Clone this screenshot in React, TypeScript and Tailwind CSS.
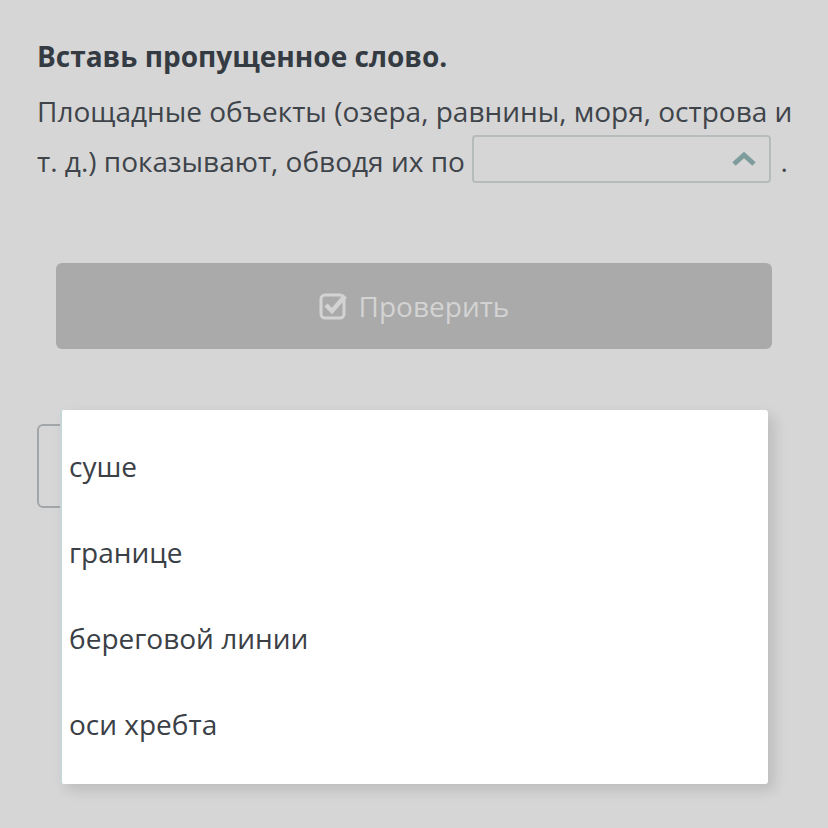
import { useState } from 'react';

const options = ['суше', 'границе', 'береговой линии', 'оси хребта'];

export default function App() {
  const [selected, setSelected] = useState('');

  return (
    <div
      className="relative min-h-[828px] w-[828px] bg-[#d6d6d6] text-[#3a3f45]"
      style={{ fontFamily: '"Open Sans", "Noto Sans", sans-serif' }}
    >
      <div className="pl-[37px] pr-[20px] pt-[36px]">
        <h1 className="text-[28px] font-bold leading-[40px] text-[#353b42]">Вставь пропущенное слово.</h1>

        <p className="mt-[10px] text-[28px] leading-[50px] text-[#3e444a]">
          Площадные объекты (озера, равнины, моря, острова и т. д.) показывают, обводя их по{' '}
          <span className="inline-flex h-[48px] w-[299px] -translate-y-[6px] items-center justify-end rounded-[4px] border-2 border-[#b6bcbc] px-[12px] align-middle">
            {selected}
            <svg width="26" height="16" viewBox="0 0 26 16" className="ml-auto">
              <path d="M3 13 L13 4 L23 13" fill="none" stroke="#7f9c9c" strokeWidth="5" />
            </svg>
          </span>{' '}
          <span className="ml-[2px]">.</span>
        </p>

        <div className="ml-[19px] mr-[36px] mt-[74px] flex h-[86px] items-center justify-center gap-[10px] rounded-[6px] bg-[#aaaaaa] text-[28px] text-[#d3d3d3]">
          <svg width="30" height="30" viewBox="0 0 30 30">
            <rect x="2" y="4" width="23" height="23" rx="4" fill="none" stroke="#d3d3d3" strokeWidth="3" />
            <path d="M7 14 L13 20 L26 5" fill="none" stroke="#d3d3d3" strokeWidth="4.5" />
          </svg>
          <span>Проверить</span>
        </div>

        <div className="mt-[75px] h-[84px] w-[120px] rounded-[6px] border-2 border-[#a3a6a8]" />
      </div>

      <ul className="absolute left-[60px] top-[410px] w-[708px] rounded-[3px] border-l-2 border-[#c7d6d6] bg-white pb-[17px] pt-[13px] shadow-[6px_6px_14px_rgba(0,0,0,0.12)]">
        {options.map((o) => (
          <li
            key={o}
            onClick={() => setSelected(o)}
            className="flex h-[86px] cursor-pointer items-center px-[7px] text-[28px] text-[#3b4046]"
          >
            {o}
          </li>
        ))}
      </ul>
    </div>
  );
}
